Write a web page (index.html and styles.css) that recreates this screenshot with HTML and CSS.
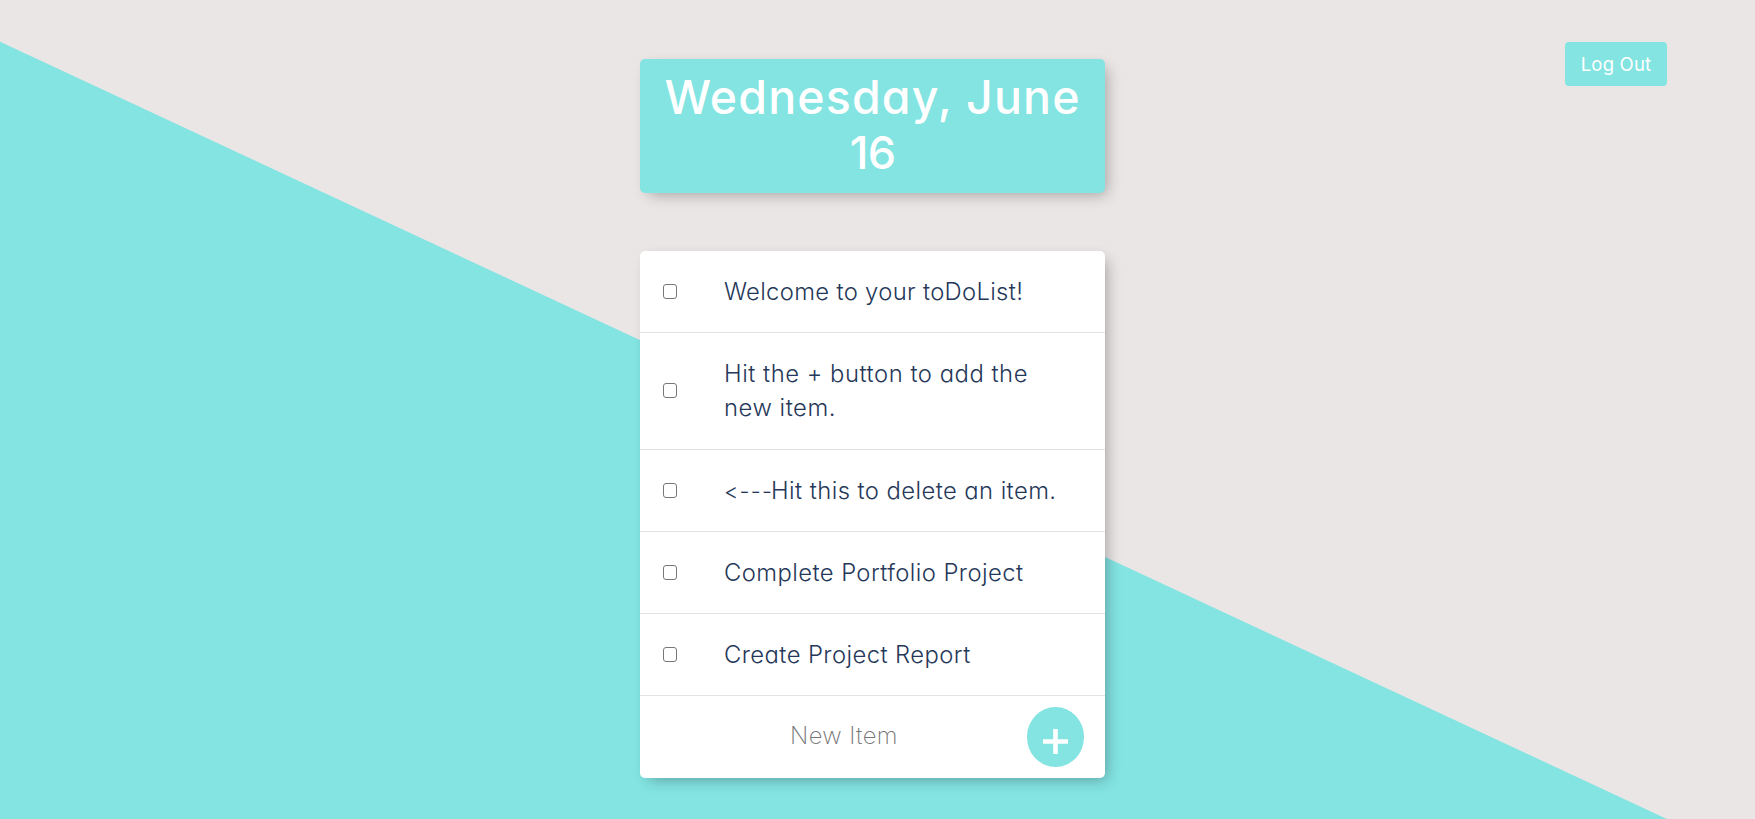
FILE: index.html
```
<!DOCTYPE html>
<html lang="en">
<head>
<meta charset="utf-8">
<title>toDoList</title>
<link rel="stylesheet" href="styles.css">
</head>
<body>
<main class="page">
  <button class="logout" type="button">Log Out</button>
  <header class="box heading"><h1>Wednesday, June <span class="day">16</span></h1></header>
  <section class="box list">
    <div class="item"><input type="checkbox"><p class="welcome">Welcome to your toDoList!</p></div>
    <div class="item"><input type="checkbox"><p class="hint">Hit the + button to add the<br>new item.</p></div>
    <div class="item"><input type="checkbox"><p class="delete"><span class="arrow">&lt;---</span>Hit this to delete an item.</p></div>
    <div class="item"><input type="checkbox"><p>Complete Portfolio Project</p></div>
    <div class="item"><input type="checkbox"><p>Create Project Report</p></div>
    <form class="item new">
      <input class="entry" type="text" placeholder="New Item">
      <button class="add" type="button" aria-label="Add">
        <svg width="25" height="25" viewBox="0 0 25 25"><path d="M12.5 0v25M0 12.5h25" stroke="#fff" stroke-width="4.6"/></svg>
      </button>
    </form>
  </section>
</main>
</body>
</html>
```

FILE: styles.css
```
* { box-sizing: border-box; }
body {
  margin: 0;
  font-family: Inter, "Open Sans", sans-serif;
  font-feature-settings: "cv11", "calt" 0;
}
.page {
  position: relative;
  height: 819px;
  overflow: hidden;
  padding-top: 58.6px;
  background: linear-gradient(25deg, #83e4e2 calc(50% - 38px), #eae6e5 calc(50% - 37px));
}
.logout {
  position: absolute;
  top: 42px;
  left: 1565px;
  width: 102px;
  height: 44px;
  padding: 0;
  border: 0;
  border-radius: 4px;
  background: #83e4e2;
  color: #fff;
  font: 400 18.5px Inter, sans-serif;
  letter-spacing: .2px;
}
.box {
  width: 465px;
  margin-left: 640px;
  border-radius: 5px;
  box-shadow: 5px 5px 15px -4px rgba(0, 0, 0, .33);
}
.heading {
  height: 134.8px;
  padding-top: 10.5px;
  background: #83e4e2;
  color: #fff;
  text-align: center;
}
h1 {
  margin: 0;
  font-size: 46.5px;
  font-weight: 550;
  line-height: 56px;
  letter-spacing: 1.15px;
  white-space: nowrap;
}
.day { display: block; font-size: 45px; letter-spacing: -.7px; }
.list {
  margin-top: 57.6px;
  background: #fff;
}
.item {
  display: flex;
  align-items: center;
  min-height: 82px;
  padding-left: 23px;
  border-bottom: 1px solid #e3e3e5;
}
.item:nth-child(2) { min-height: 117px; }
.item input[type="checkbox"] {
  appearance: none;
  width: 14px;
  height: 15px;
  margin: 0 47px 0 0;
  border: 1px solid #777;
  border-radius: 3px;
  background: #fff;
}
.item p {
  margin: 0;
  padding-top: 1px;
  color: #263859;
  font-size: 23.8px;
  font-weight: 280;
  line-height: 34.5px;
  letter-spacing: .43px;
  white-space: nowrap;
}
.item .welcome { letter-spacing: .33px; }
.item .hint { letter-spacing: .53px; }
.item .delete { letter-spacing: .43px; }
.item .arrow {
  display: inline-block;
  width: 47px;
  font-size: 22px;
  letter-spacing: 1.2px;
}
.new { border: 0; padding-left: 70px; }
.entry {
  width: 267px;
  padding: 0 0 2px 1px;
  border: 0;
  text-align: center;
  font: 200 23.8px Inter, sans-serif;
  font-feature-settings: inherit;
  letter-spacing: .4px;
}
.entry::placeholder { color: #757575; }
.add {
  display: flex;
  align-items: center;
  justify-content: center;
  width: 57.5px;
  height: 60px;
  margin-left: 49.5px;
  padding: 9px 0 0;
  border: 0;
  border-radius: 50%;
  background: #83e4e2;
}
```
